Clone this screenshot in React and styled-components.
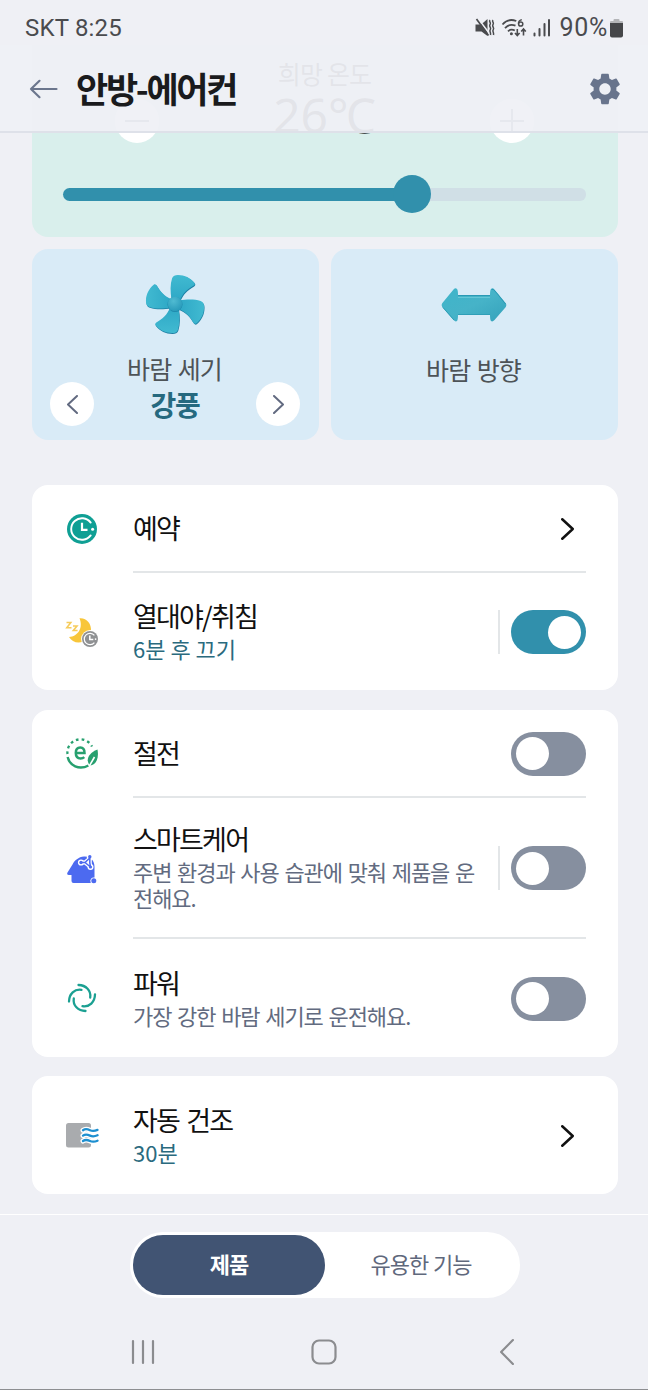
import React, { useState } from 'react';
import styled, { createGlobalStyle } from 'styled-components';
import { MdSettings } from 'react-icons/md';

const GlobalStyle = createGlobalStyle`
  * {
    box-sizing: border-box;
  }
  body {
    margin: 0;
    background: #eff0f5;
    font-family: 'Noto Sans CJK KR', 'Noto Sans', sans-serif;
  }
  button {
    border: none;
    padding: 0;
    background: none;
    font-family: inherit;
  }
`;

function MuteIcon() {
  return (
    <svg width="20" height="20" viewBox="0 0 20 20" fill="#4a4b4e">
      <path d="M.5 6.500h4.500l3.500-2L12.500 1v17L6.500 13.500h-6z" />
      <path d="M3 .5l11 14.500" stroke="#eff0f5" strokeWidth="1.600" />
      <path d="M1.500 1l12 16.500" stroke="#4a4b4e" strokeWidth="1.700" />
      <path
        d="M15 2c-1.500 1.500 1 2.500.3 4s-1.300 1.500 0 3.500-1 2-.3 4 .8 2 .5 3.500M18 2c-1.500 1.500 1 2.500.3 4s-1.300 1.500 0 3.500-1 2-.3 4 .8 2 .5 3.500"
        fill="none"
        stroke="#4a4b4e"
        strokeWidth="1.500"
      />
    </svg>
  );
}

function WifiIcon() {
  return (
    <svg width="26" height="20" viewBox="0 0 26 20" fill="none" stroke="#4a4b4e" strokeWidth="1.800">
      <path d="M1.500 6.500C5.500 1.800 11 1.400 15.300 3" />
      <path d="M4 10.200c3-3.400 7-4 10.500-2.500" />
      <path d="M7 13.400c2-2 4.500-2.200 6.800-.8" />
      <circle cx="10.400" cy="15.800" r="1.500" fill="#4a4b4e" stroke="none" />
      <path d="M20.800 1.600c-2.600.8-3.400 2.600-3.300 4.200" strokeWidth="1.500" />
      <circle cx="19.700" cy="6" r="2.100" strokeWidth="1.500" />
      <path d="M16.300 11v6.500M14 15l2.300 2.500 2.300-2.500M22.500 17.500V11M20.200 13.500L22.500 11l2.300 2.500" strokeWidth="1.600" />
    </svg>
  );
}

function SignalIcon() {
  return (
    <svg width="18" height="20" viewBox="0 0 18 20" stroke="#4a4b4e" strokeWidth="2" strokeLinecap="round">
      <path d="M1.500 15.500v2M6.500 11v6.500M11.500 6v11.500M16 2v15.500" />
    </svg>
  );
}

function BatteryIcon() {
  return (
    <svg width="13" height="19" viewBox="0 0 13 19">
      <path d="M4.500 0h4a1 1 0 0 1 1 1v1H12a1 1 0 0 1 1 1v1H0V3a1 1 0 0 1 1-1h2.500V1a1 1 0 0 1 1-1z" fill="#b4b5b8" />
      <path d="M0 4h13v12.500a2 2 0 0 1-2 2H2a2 2 0 0 1-2-2z" fill="#454649" />
    </svg>
  );
}

function BackArrow() {
  return (
    <svg width="30" height="22" viewBox="0 0 30 22" fill="none" stroke="#6b768d" strokeWidth="2.200" strokeLinecap="round" strokeLinejoin="round">
      <path d="M27.500 11H2M10.500 2.800L2 11l8.500 8.200" />
    </svg>
  );
}

function Chevron({ left, width = 13, height = 22, color = '#111', weight = 2.5 }) {
  const m = weight / 2;
  return (
    <svg width={width} height={height} viewBox={`0 0 ${width} ${height}`} fill="none" stroke={color} strokeWidth={weight} strokeLinecap="round" strokeLinejoin="round">
      {left ? (
        <path d={`M${width - m} ${m}L${m} ${height / 2}L${width - m} ${height - m}`} />
      ) : (
        <path d={`M${m} ${m}L${width - m} ${height / 2}L${m} ${height - m}`} />
      )}
    </svg>
  );
}

function FanIcon() {
  const blade =
    'M-3.500-4C-5-13-5-20-3-26.500C-2-29.200 0-30 3-30C10-30 16-27 20-22C20.800-21 20.500-20 19.300-19C12.500-15 8-11 5-3.500Z';
  return (
    <svg width="62" height="62" viewBox="-32 -32 64 64">
      <defs>
        <linearGradient id="blade" x1="0" y1="-30" x2="0" y2="0" gradientUnits="userSpaceOnUse">
          <stop offset="0" stopColor="#41bad1" />
          <stop offset="1" stopColor="#2ba5c4" />
        </linearGradient>
        <radialGradient id="hub" cx=".4" cy=".3" r=".8">
          <stop offset="0" stopColor="#50bbd2" />
          <stop offset="1" stopColor="#2396b7" />
        </radialGradient>
      </defs>
      {[0, 90, 180, 270].map((angle) => (
        <g key={angle} transform={`rotate(${angle})`}>
          <path d={blade} fill="#1d7fa3" transform={`rotate(${-angle}) translate(.5 .9) rotate(${angle})`} />
          <path d={blade} fill="url(#blade)" />
        </g>
      ))}
      <circle r="7.700" cy=".5" fill="#1d86a9" />
      <circle r="7.500" fill="url(#hub)" />
    </svg>
  );
}

function DirectionIcon() {
  return (
    <svg width="66" height="36" viewBox="0 0 66 36">
      <defs>
        <linearGradient id="arrow" x1="0" y1="0" x2="1" y2="1">
          <stop offset="0" stopColor="#3fb5ca" />
          <stop offset=".5" stopColor="#46b3c8" />
          <stop offset="1" stopColor="#35a2bb" />
        </linearGradient>
      </defs>
      <path
        d="M1.200 16.200L12.500 2.500Q14.500.5 16 2Q17 3 17 8H49Q49 3 50 2Q51.500.5 53.500 2.500L64.800 16.200Q66 18 64.800 20L53.500 33Q51.500 35.200 50 34Q49 33 49 28H17Q17 33 16 34Q14.500 35.200 12.500 33L1.200 20Q0 18 1.200 16.200Z"
        fill="url(#arrow)"
      />
      <path d="M17 10.500h32" stroke="#65c6d6" strokeWidth="1" />
      <path d="M17 8.500h32M50.500 2.500Q52 1.500 54 4L64.500 17" fill="none" stroke="#2b99b4" strokeWidth="1" />
      <path d="M17 27.500h32M2 20.500L13 33" stroke="#2f9eb7" strokeWidth="1" />
    </svg>
  );
}

function ScheduleIcon() {
  return (
    <svg width="32" height="32" viewBox="0 0 32 32" fill="none">
      <circle cx="16" cy="16" r="15" fill="#0f9f94" />
      <path d="M24.700 9.600A10.800 10.800 0 1 0 24.700 22.400" stroke="#fff" strokeWidth="1.900" strokeLinecap="round" />
      <path d="M16 9.800v7h5.500" stroke="#fff" strokeWidth="2.200" />
      <circle cx="26.600" cy="16.200" r="1.500" fill="#fff" />
    </svg>
  );
}

function SleepIcon() {
  return (
    <svg width="34" height="32" viewBox="0 0 34 32" fill="none">
      <path d="M14.500 2.200C21.500 1.500 26.500 7.500 26 14.500C25.500 21.500 20 26.500 13.500 26.500C9.500 26.500 6 24.500 4 21C13 20.500 18.500 11.500 14.500 2.200Z" fill="#f8c63a" />
      <path d="M1.500 6.500h4.300L1.800 11.800h4.700M8 10h4L8.300 14.500h4.300" stroke="#f6cc5c" strokeWidth="1.600" />
      <circle cx="25" cy="23" r="8.900" fill="#fff" />
      <circle cx="25" cy="23" r="8" fill="#8f9193" />
      <path d="M29.400 19.400A5.700 5.700 0 1 0 29.400 26.600" stroke="#fff" strokeWidth="1.200" />
      <path d="M24.800 19.500v4h3.500" stroke="#fff" strokeWidth="1.500" />
      <circle cx="30.600" cy="23.100" r=".9" fill="#fff" />
    </svg>
  );
}

function EcoIcon() {
  return (
    <svg width="34" height="32" viewBox="0 0 34 32" fill="none">
      <path d="M2.500 16A13 13 0 0 1 27 8.500" stroke="#27a06f" strokeWidth="2.300" strokeDasharray="2.700 3.100" />
      <path d="M2.600 19C4.500 27.500 14 32.500 23.500 27.500" stroke="#27a06f" strokeWidth="2.400" />
      <path d="M32.500 11.500C34 20 31.500 26.500 25.500 27.500C20.500 24 22 15.500 32.500 11.500Z" fill="#27a06f" />
      <path d="M29.500 19L24 28.500" stroke="#fff" strokeWidth="1.600" />
      <path d="M11 15h8.500C19.500 11.500 17.800 9.600 15.300 9.600c-2.800 0-4.500 2-4.500 5.400s1.800 5.400 4.800 5.400c1.500 0 2.800-.5 3.700-1.300" stroke="#27a06f" strokeWidth="2.500" />
    </svg>
  );
}

function SmartIcon() {
  return (
    <svg width="32" height="32" viewBox="0 0 32 32" fill="none">
      <path d="M18 3.500C24.500 3 28.500 7.500 28.500 14v10.500a3.500 3.500 0 0 0-3.800 5V30H7.500Q5.500 30 5.500 28v-6H2.800Q.4 21.500 1.500 19.500L6.500 11.500C8.500 7.500 12.500 3.900 18 3.500Z" fill="#4c6af0" />
      <circle cx="27.800" cy="27.800" r="2.500" fill="#4c6af0" />
      <path d="M14.800 9.500h4l5-4v5l.7 3.500M19 9.500l5.500 4.500" stroke="#fff" strokeWidth="4" strokeLinejoin="round" />
      <g fill="#fff">
        <circle cx="15" cy="9.500" r="3.100" />
        <circle cx="23.800" cy="4.500" r="3" />
        <circle cx="24.500" cy="14" r="3" />
      </g>
      <path d="M15 9.500h4l4.800-4.500v5l.7 4M19 9.500l5.500 4.500" stroke="#4c6af0" strokeWidth="1.500" />
      <g fill="#4c6af0">
        <circle cx="15" cy="9.500" r="1.700" />
        <circle cx="23.800" cy="3.800" r="1.700" />
        <circle cx="24.500" cy="14" r="1.600" />
      </g>
    </svg>
  );
}

function PowerIcon() {
  return (
    <svg width="32" height="32" viewBox="-16 -16 32 32" fill="none" stroke="#1ba092" strokeWidth="2.300" strokeLinecap="round">
      {[0, 90, 180, 270].map((angle) => (
        <path key={angle} transform={`rotate(${angle})`} d="M-3.500-13C4-12.800 9.300-7.500 8.200-.5" />
      ))}
    </svg>
  );
}

function DryIcon() {
  const wave = 'c2.500-1.800 4.500-1.200 7 0s5 .8 7.500-.3';
  return (
    <svg width="34" height="28" viewBox="0 0 34 28" fill="none" strokeLinecap="round">
      <rect x="1" y="2" width="25" height="24.500" rx="2.500" fill="#a9abae" />
      <g stroke="#fff" strokeWidth="5">
        <path d={`M18 9.200${wave}M18 14.600${wave}M18 20${wave}`} />
      </g>
      <g stroke="#1d8fd0" strokeWidth="2.300">
        <path d={`M18 9.200${wave}M18 14.600${wave}M18 20${wave}`} />
      </g>
    </svg>
  );
}

function Toggle({ defaultOn }) {
  const [on, setOn] = useState(!!defaultOn);
  return (
    <Switch $on={on} onClick={() => setOn(!on)}>
      <Knob />
    </Switch>
  );
}

function Item({ icon, title, desc, accent, height, split, last, children }) {
  return (
    <Row $height={height}>
      <IconCell>{icon}</IconCell>
      <RowBody $last={last}>
        <RowText $lift={!!desc}>
          <RowTitle>{title}</RowTitle>
          {desc && <RowDesc $accent={accent}>{desc}</RowDesc>}
        </RowText>
        {split && <Separator />}
        {children}
      </RowBody>
    </Row>
  );
}

export default function App() {
  const [tab, setTab] = useState('product');

  return (
    <Screen>
      <GlobalStyle />
      <Header>
        <StatusBar>
          <Carrier>SKT 8:25</Carrier>
          <StatusIcons>
            <MuteIcon />
            <WifiIcon />
            <SignalIcon />
            <Percent>90%</Percent>
            <BatteryIcon />
          </StatusIcons>
        </StatusBar>
        <TitleBar>
          <BackArrow />
          <Title>안방-에어컨</Title>
          <MdSettings size={38} color="#68748c" />
        </TitleBar>
      </Header>

      <Content>
        <TempCard>
          <TempRow>
            <RoundButton>
              <MinusLine />
            </RoundButton>
            <TempText>
              <TempLabel>희망 온도</TempLabel>
              <TempValue>26℃</TempValue>
            </TempText>
            <RoundButton>
              <svg width="24" height="24" viewBox="0 0 24 24" stroke="#55607a" strokeWidth="2">
                <path d="M0 12h24M12 0v24" />
              </svg>
            </RoundButton>
          </TempRow>
          <Slider>
            <SliderFill />
            <SliderKnob />
            <SliderRest />
          </Slider>
        </TempCard>

        <WindRow>
          <WindCard>
            <WindArt>
              <FanIcon />
            </WindArt>
            <WindLabel>바람 세기</WindLabel>
            <WindControl>
              <RoundButton>
                <Chevron left width={11} height={19} color="#626a80" weight={2} />
              </RoundButton>
              <WindValue>강풍</WindValue>
              <RoundButton>
                <Chevron width={11} height={19} color="#626a80" weight={2} />
              </RoundButton>
            </WindControl>
          </WindCard>
          <WindCard $drop>
            <WindArt>
              <DirectionIcon />
            </WindArt>
            <WindLabel>바람 방향</WindLabel>
          </WindCard>
        </WindRow>

        <Card>
          <Item icon={<ScheduleIcon />} title="예약" height={88}>
            <ChevronCell>
              <Chevron />
            </ChevronCell>
          </Item>
          <Item icon={<SleepIcon />} title="열대야/취침" desc="6분 후 끄기" accent height={117} split last>
            <Toggle defaultOn />
          </Item>
        </Card>

        <Card>
          <Item icon={<EcoIcon />} title="절전" height={88}>
            <Toggle />
          </Item>
          <Item icon={<SmartIcon />} title="스마트케어" desc="주변 환경과 사용 습관에 맞춰 제품을 운전해요." height={141} split>
            <Toggle />
          </Item>
          <Item icon={<PowerIcon />} title="파워" desc="가장 강한 바람 세기로 운전해요." height={118} last>
            <Toggle />
          </Item>
        </Card>

        <Card>
          <Item icon={<DryIcon />} title="자동 건조" desc="30분" accent height={118} last>
            <ChevronCell>
              <Chevron />
            </ChevronCell>
          </Item>
        </Card>
      </Content>

      <Footer>
        <Tabs>
          <Tab $active={tab === 'product'} onClick={() => setTab('product')}>
            제품
          </Tab>
          <Tab $active={tab === 'useful'} onClick={() => setTab('useful')}>
            유용한 기능
          </Tab>
        </Tabs>
        <NavBar>
          <svg width="24" height="26" viewBox="0 0 24 26" stroke="#8b8c8f" strokeWidth="2.200" strokeLinecap="round">
            <path d="M2 2v22M12 2v22M22 2v22" />
          </svg>
          <svg width="26" height="26" viewBox="0 0 26 26" fill="none" stroke="#8b8c8f" strokeWidth="2.200">
            <rect x="1.500" y="1.500" width="23" height="23" rx="6.500" />
          </svg>
          <NavEnd>
            <Chevron left width={14} height={26} color="#8b8c8f" weight={2.2} />
          </NavEnd>
        </NavBar>
      </Footer>
    </Screen>
  );
}

const Screen = styled.div`
  position: relative;
  display: flex;
  flex-direction: column;
  width: 648px;
  height: 1390px;
  overflow: hidden;
  background: #eff0f5;
  border-bottom: 1px solid #8d8e91;
`;

/* floats over the scrolled content */
const Header = styled.header`
  position: absolute;
  top: 0;
  left: 0;
  right: 0;
  z-index: 2;
`;

const StatusBar = styled.div`
  display: flex;
  justify-content: space-between;
  align-items: center;
  height: 45px;
  padding: 11px 25px 0 25px;
  background: #eff0f5;
  color: #4a4b4e;
  font-family: Roboto, sans-serif;
`;

const Carrier = styled.span`
  font-size: 24px;
  line-height: 30px;
  letter-spacing: 0.2px;
`;

const StatusIcons = styled.div`
  display: flex;
  align-items: center;
  gap: 6px;
`;

const Percent = styled.span`
  font-size: 25px;
  line-height: 30px;
  letter-spacing: 0.7px;
  margin: 0 -4px 0 2px;
`;

const TitleBar = styled.div`
  display: flex;
  align-items: center;
  height: 88px;
  padding: 2px 24px 0 29px;
  background: rgba(239, 240, 245, 0.94);
  border-bottom: 2px solid #dee1e9;
`;

const Title = styled.h1`
  flex: 1;
  margin: 0 0 2px 17px;
  font-size: 35px;
  line-height: 44px;
  font-weight: 700;
  letter-spacing: -2.3px;
  color: #1a1b1d;
`;

const Content = styled.main`
  flex: none;
  height: 1214px;
  padding: 45px 30px 0 32px;
`;

const TempCard = styled.section`
  height: 192px;
  padding: 10px 32px 0 31px;
  background: #d9efec;
  border-radius: 0 0 16px 16px;
`;

const TempRow = styled.div`
  display: flex;
  justify-content: space-between;
  align-items: flex-end;
  height: 88px;
  padding: 0 52px;
`;

const RoundButton = styled.button`
  display: flex;
  align-items: center;
  justify-content: center;
  flex: none;
  width: 44px;
  height: 44px;
  border-radius: 50%;
  background: #fff;
`;

const MinusLine = styled.span`
  width: 24px;
  height: 2px;
  background: #55607a;
`;

const TempText = styled.div`
  display: flex;
  flex-direction: column;
  align-items: center;
  height: 88px;
  color: #222;
`;

const TempLabel = styled.span`
  font-size: 25px;
  line-height: 36px;
  letter-spacing: -0.8px;
`;

const TempValue = styled.span`
  font-family: 'Noto Sans', 'Noto Sans CJK KR', sans-serif;
  font-size: 48px;
  line-height: 48px;
`;

const Slider = styled.div`
  display: flex;
  align-items: center;
  height: 38px;
  margin-top: 32px;
`;

const SliderFill = styled.div`
  width: 332px;
  height: 13px;
  margin-right: -2px;
  border-radius: 7px 0 0 7px;
  background: #3190ac;
`;

const SliderKnob = styled.div`
  z-index: 1;
  width: 38px;
  height: 38px;
  border-radius: 50%;
  background: #3190ac;
`;

const SliderRest = styled.div`
  flex: 1;
  height: 13px;
  margin-left: -2px;
  border-radius: 0 6px 6px 0;
  background: #d0dfe6;
`;

const WindRow = styled.div`
  display: grid;
  grid-template-columns: 1fr 1fr;
  gap: 12px;
  margin: 12px 0 45px;
`;

const WindCard = styled.section`
  display: flex;
  flex-direction: column;
  align-items: center;
  height: 191px;
  padding: ${(p) => (p.$drop ? 21 : 20)}px 2px 0 0;
  border-radius: 16px;
  background: #d9ebf7;
`;

const WindArt = styled.div`
  display: flex;
  align-items: center;
  justify-content: center;
  height: 70px;
`;

const WindLabel = styled.span`
  margin-top: 13px;
  font-size: 25px;
  line-height: 32px;
  letter-spacing: -0.8px;
  word-spacing: 1.5px;
  color: #4d5357;
`;

const WindControl = styled.div`
  display: flex;
  align-items: center;
  justify-content: space-between;
  align-self: stretch;
  height: 44px;
  margin-top: -2px;
  padding: 0 17px 0 18px;
`;

const WindValue = styled.strong`
  font-size: 28px;
  line-height: 44px;
  font-weight: 700;
  letter-spacing: -1.2px;
  color: #26697f;
`;

const Card = styled.section`
  margin-bottom: 20px;
  border-radius: 16px;
  background: #fff;

  & + & {
    margin-bottom: 19px;
  }
`;

const Row = styled.div`
  display: flex;
  height: ${(p) => p.$height}px;
`;

const IconCell = styled.div`
  display: flex;
  align-items: center;
  justify-content: center;
  width: 101px;
  padding-right: 1px;
`;

const RowBody = styled.div`
  flex: 1;
  display: flex;
  align-items: center;
  margin-right: 32px;
  border-bottom: ${(p) => (p.$last ? 'none' : '2px solid #e3e6e8')};
`;

const RowText = styled.div`
  flex: 1;
  display: flex;
  flex-direction: column;
  gap: 2px;
  padding-bottom: ${(p) => (p.$lift ? 3 : 0)}px;
`;

const RowTitle = styled.span`
  font-size: 27px;
  line-height: 34px;
  letter-spacing: -1.8px;
  word-spacing: 3px;
  color: #111;
`;

const RowDesc = styled.span`
  font-size: 22px;
  line-height: 26px;
  letter-spacing: ${(p) => (p.$accent ? 0 : -1.1)}px;
  word-spacing: ${(p) => (p.$accent ? 0 : 2)}px;
  word-break: break-all;
  color: ${(p) => (p.$accent ? '#2a6a7e' : '#626b80')};
`;

const Separator = styled.div`
  width: 2px;
  height: 44px;
  margin: 0 11px;
  background: #e3e6e8;
`;

const Switch = styled.button`
  display: flex;
  align-items: center;
  justify-content: ${(p) => (p.$on ? 'flex-end' : 'flex-start')};
  flex: none;
  width: 75px;
  height: 44px;
  margin-top: 1px;
  padding: 0 5px;
  border-radius: 22px;
  background: ${(p) => (p.$on ? '#3190ac' : '#868f9f')};
`;

const Knob = styled.span`
  width: 33px;
  height: 33px;
  border-radius: 50%;
  background: #fff;
`;

const ChevronCell = styled.div`
  display: flex;
  margin: 1px 12px 0 0;
`;

const Footer = styled.footer`
  flex: 1;
  display: flex;
  flex-direction: column;
  align-items: center;
  padding-top: 17px;
  border-top: 1px solid #fff;
`;

const Tabs = styled.div`
  display: flex;
  width: 390px;
  height: 66px;
  margin-left: 2px;
  padding: 3px;
  border-radius: 33px;
  background: #fff;
`;

const Tab = styled.button`
  flex: 1;
  padding-bottom: 4px;
  border-radius: 30px;
  font-size: 22px;
  line-height: 30px;
  letter-spacing: -1px;
  word-spacing: 1px;
  font-weight: ${(p) => (p.$active ? 700 : 400)};
  color: ${(p) => (p.$active ? '#fff' : '#5f687c')};
  background: ${(p) => (p.$active ? '#415473' : 'transparent')};
`;

const NavBar = styled.nav`
  display: grid;
  grid-template-columns: 1fr auto 1fr;
  align-self: stretch;
  height: 26px;
  margin-top: 41px;
  padding: 0 132px 0 131px;
`;

const NavEnd = styled.div`
  display: flex;
  justify-self: end;
  padding-right: 2px;
`;
